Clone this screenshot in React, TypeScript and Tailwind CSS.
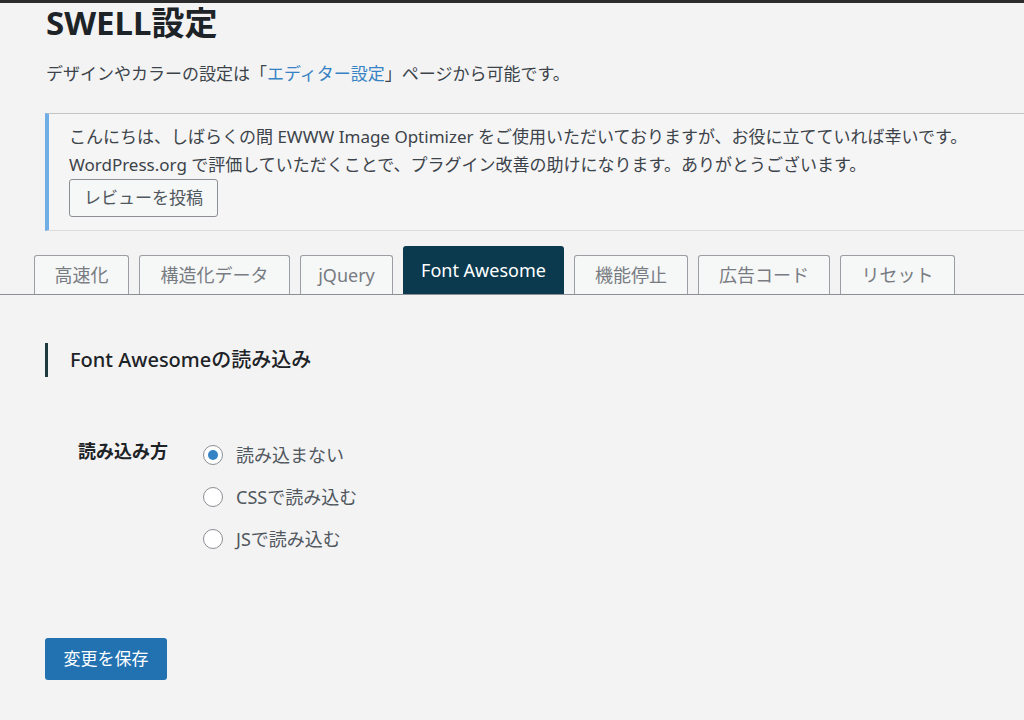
const font = { fontFamily: '"Noto Sans", "Noto Sans CJK JP", sans-serif' }

const tabs = [
    { label: '高速化', w: 'w-[95px]' },
    { label: '構造化データ', w: 'w-[151px]' },
    { label: 'jQuery', w: 'w-[93px]' },
    { label: 'Font Awesome', w: 'w-[161px]', active: true },
    { label: '機能停止', w: 'w-[114px]' },
    { label: '広告コード', w: 'w-[132px]' },
    { label: 'リセット', w: 'w-[115px]' },
]

const options = ['読み込まない', 'CSSで読み込む', 'JSで読み込む']

function Radio({ checked }: { checked?: boolean }) {
    return (
        <span className="w-[20px] h-[20px] rounded-full border border-[#8c8f94] bg-white flex items-center justify-center shrink-0">
            {checked && <span className="w-[10px] h-[10px] rounded-full bg-[#3582c4]"></span>}
        </span>
    )
}

export default function App() {
    return (
        <div
            className="min-h-[720px] bg-[#f3f3f3] border-t-[3px] border-[#2c2c2c] text-[#3c434a] overflow-hidden"
            style={font}
        >
            {/* page header */}
            <div className="pl-[46px]">
                <h1 className="text-[33px] leading-[42px] -mt-[1px] font-bold text-[#1d2327]">SWELL設定</h1>
                <p className="mt-[16px] text-[17px] leading-[28px]">
                    デザインやカラーの設定は「<span className="text-[#3582c4]">エディター設定</span>」ページから可能です。
                </p>
            </div>

            {/* notice */}
            <div className="ml-[45px] mt-[25px] bg-[#f5f5f5] border-l-4 border-l-[#72aee6] border-t border-t-[#c3c4c7] border-b border-b-[#dcdcde] pl-[20px] pt-[9px] pb-[13px]">
                <p className="text-[17px] leading-[28px] whitespace-nowrap">
                    こんにちは、しばらくの間 EWWW Image Optimizer をご使用いただいておりますが、お役に立てていれば幸いです。
                </p>
                <p className="text-[17px] leading-[28px] whitespace-nowrap">
                    WordPress.org で評価していただくことで、プラグイン改善の助けになります。ありがとうございます。
                </p>
                <button className="h-[38px] w-[149px] border border-[#8c8f94] rounded-[3px] bg-[#f6f7f7] text-[17px] text-[#50575e]">
                    レビューを投稿
                </button>
            </div>

            {/* tabs */}
            <div className="mt-[15px] flex items-end gap-[10px] pl-[34px] border-b border-[#8c8f94]">
                {tabs.map((t) =>
                    t.active ? (
                        <div
                            key={t.label}
                            className={`${t.w} h-[48px] rounded-t-[3px] bg-[#0b3a4f] text-white text-[18px] flex items-center justify-center`}
                        >
                            {t.label}
                        </div>
                    ) : (
                        <div
                            key={t.label}
                            className={`${t.w} h-[39px] rounded-t-[3px] border border-b-0 border-[#9a9da1] bg-[#f6f7f7] text-[#787c82] text-[18px] flex items-center justify-center`}
                        >
                            {t.label}
                        </div>
                    )
                )}
            </div>

            {/* section */}
            <div className="pl-[45px] mt-[48px]">
                <div className="flex items-center h-[34px] border-l-[3px] border-[#1d3a3f] pl-[22px]">
                    <h2 className="text-[20px] font-medium text-[#1d2327]">Font Awesomeの読み込み</h2>
                </div>

                <div className="mt-[62px] flex">
                    <div className="w-[158px] pl-[33px] text-[18px] font-bold text-[#1d2327] leading-[24px]">
                        読み込み方
                    </div>
                    <div className="flex flex-col gap-[18px] pt-[4px]">
                        {options.map((o, i) => (
                            <label key={o} className="flex items-center gap-[13px] h-[24px] text-[18px] text-[#50575e]">
                                <Radio checked={i === 0} />
                                {o}
                            </label>
                        ))}
                    </div>
                </div>

                <button className="mt-[87px] w-[122px] h-[42px] rounded-[3px] bg-[#2271b1] text-white text-[17px]">
                    変更を保存
                </button>
            </div>
        </div>
    )
}
